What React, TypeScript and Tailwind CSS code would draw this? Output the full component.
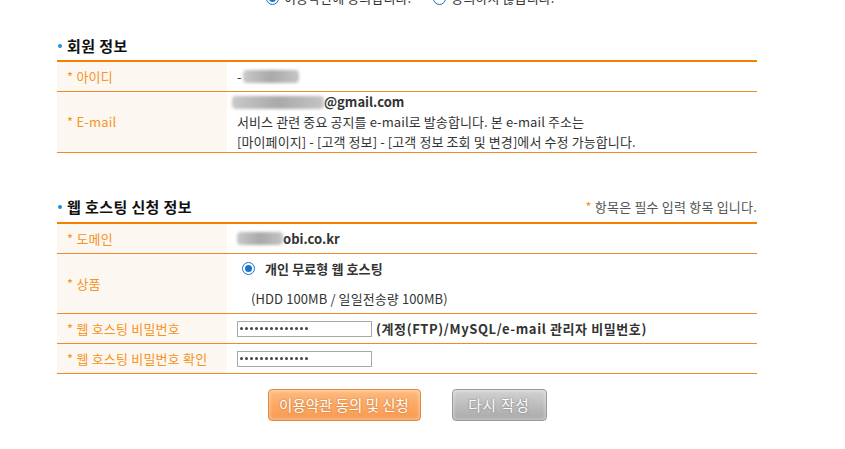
import type { ReactNode } from "react";

function Blur({ w }: { w: number }) {
  return (
    <span
      className="inline-block h-[13px] rounded-sm bg-gradient-to-r from-[#c9c9c9] via-[#a9a9a9] to-[#c4c4c4] blur-[1.5px] align-middle"
      style={{ width: w }}
    />
  );
}

function Row({ label, children, h }: { label: string; children: ReactNode; h: string }) {
  return (
    <div className={`flex border-b border-[#f0892a] ${h}`}>
      <div className="flex w-[170px] shrink-0 items-center bg-[#fdf7f1] pl-[10px] text-[13px] tracking-[0.2px] text-[#f7931e]">
        * {label}
      </div>
      <div className="flex flex-1 flex-col justify-center pl-[10px] text-[13px] tracking-[0.1px] text-[#333]">
        {children}
      </div>
    </div>
  );
}

function Heading({ title, note }: { title: string; note?: boolean }) {
  return (
    <div className="flex h-[20px] items-center justify-between">
      <div className="flex items-center gap-[5px] pl-[1px]">
        <span className="h-[4px] w-[4px] rounded-full bg-[#1a8ee0]" />
        <span className="text-[15px] font-bold tracking-[0.4px] text-[#111]">{title}</span>
      </div>
      {note && (
        <span className="text-[13px] tracking-[0.2px] text-[#555]">
          <span className="text-[#f7931e]">*</span> 항목은 필수 입력 항목 입니다.
        </span>
      )}
    </div>
  );
}

function Radio({ on }: { on?: boolean }) {
  return (
    <span className="flex h-[13px] w-[13px] items-center justify-center rounded-full border border-[#1a73c8] bg-white">
      {on && <span className="h-[7px] w-[7px] rounded-full bg-[#1a73c8]" />}
    </span>
  );
}

function Pw() {
  return (
    <span className="flex h-[16px] w-[135px] items-center gap-[2px] border border-[#a9a9a9] bg-white pl-[2px]">
      {Array.from({ length: 14 }, (_, i) => (
        <span key={i} className="h-[3px] w-[3px] rounded-full bg-[#444]" />
      ))}
    </span>
  );
}

export default function App() {
  return (
    <div className="h-[449px] w-[845px] overflow-hidden bg-white font-['Noto_Sans_CJK_KR','Noto_Sans',sans-serif]">
      <div className="-mt-[11px] flex h-[18px] items-center pl-[266px] text-[13px] leading-[18px] tracking-[0.1px] text-[#333]">
        <Radio on />
        <span className="ml-[5px]">이용약관에 동의합니다.</span>
        <span className="ml-[22px]">
          <Radio />
        </span>
        <span className="ml-[5px]">동의하지 않습니다.</span>
      </div>

      <div className="ml-[57px] w-[700px]">
        <div className="mt-[29px] mb-[4px]">
          <Heading title="회원 정보" />
        </div>
        <div className="border-t-2 border-[#f77f00]">
          <Row label="아이디" h="h-[30px]">
            <div className="flex items-center gap-[1px]">
              <span>-</span>
              <Blur w={56} />
            </div>
          </Row>
          <Row label="E-mail" h="h-[61px]">
            <div className="leading-[20px]">
              <div className="-ml-[5px] flex items-center">
                <Blur w={92} />
                <span className="text-[13px] font-bold tracking-normal text-[#333]">@gmail.com</span>
              </div>
              <div>서비스 관련 중요 공지를 e-mail로 발송합니다. 본 e-mail 주소는</div>
              <div>[마이페이지] - [고객 정보] - [고객 정보 조회 및 변경]에서 수정 가능합니다.</div>
            </div>
          </Row>
        </div>

        <div className="mt-[44px] mb-[5px]">
          <Heading title="웹 호스팅 신청 정보" note />
        </div>
        <div className="border-t-2 border-[#f77f00]">
          <Row label="도메인" h="h-[30px]">
            <div className="flex items-center">
              <Blur w={46} />
              <span className="text-[13px] font-bold tracking-normal text-[#333]">obi.co.kr</span>
            </div>
          </Row>
          <Row label="상품" h="h-[60px]">
            <div className="flex items-center gap-[10px] pl-[5px]">
              <Radio on />
              <span className="font-semibold">개인 무료형 웹 호스팅</span>
            </div>
            <div className="mt-[10px] pl-[14px]">(HDD 100MB / 일일전송량 100MB)</div>
          </Row>
          <Row label="웹 호스팅 비밀번호" h="h-[30px]">
            <div className="flex items-center gap-[4px]">
              <Pw />
              <span className="text-[13px] font-bold tracking-[0.6px] text-[#333]">
                (계정(FTP)/MySQL/e-mail 관리자 비밀번호)
              </span>
            </div>
          </Row>
          <Row label="웹 호스팅 비밀번호 확인" h="h-[30px]">
            <div className="flex items-center">
              <Pw />
            </div>
          </Row>
        </div>

        <div className="mt-[15px] flex justify-center gap-[31px]">
          <button className="h-[32px] w-[153px] rounded-[4px] border border-[#dc8a45] bg-gradient-to-b from-[#fdbb7f] via-[#fba863] to-[#f89a50] text-[14.5px] text-white shadow-[inset_0_0_4px_rgba(255,255,255,0.6)] [text-shadow:0_0_2px_rgba(150,70,0,0.6)]">
            이용약관 동의 및 신청
          </button>
          <button className="h-[32px] w-[95px] rounded-[4px] border border-[#9a9a9a] bg-gradient-to-b from-[#d2d2d2] via-[#bdbdbd] to-[#a9a9a9] text-[14.5px] tracking-[1px] text-white shadow-[inset_0_0_4px_rgba(255,255,255,0.6)] [text-shadow:0_0_2px_rgba(80,80,80,0.7)]">
            다시 작성
          </button>
        </div>
      </div>
    </div>
  );
}
